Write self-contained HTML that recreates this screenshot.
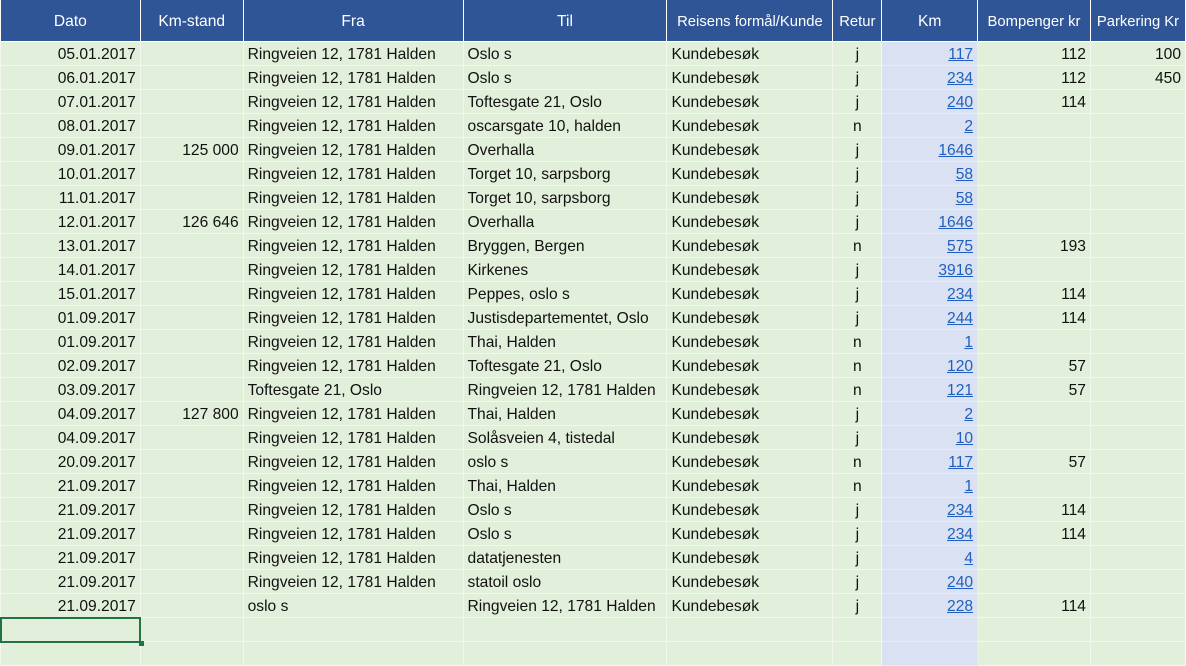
<!DOCTYPE html>
<html><head><meta charset="utf-8"><style>
body{margin:0;width:1186px;height:665px;overflow:hidden;background:#e2efda;font-family:"Liberation Sans",sans-serif;font-size:15.6px;color:#111}
table{border-collapse:collapse;table-layout:fixed;position:absolute;left:0;top:0}
td,th{padding:2px 4px 0 4px;height:21px;border:1px solid #f3f7ef;white-space:nowrap;overflow:hidden}
th{background:#2f5597;color:#fff;font-weight:normal;height:39px;border:1px solid #fff;border-top:none;text-align:center;font-size:15.6px}
td.r{text-align:right}td.c{text-align:center}
td.k{background:#d9e1f2;text-align:right;border-color:#e6ebf6}
td.k a{color:#1f5fbf;text-decoration:underline}
td.bl{border-left:1px solid #8c8c8c}
.sel{position:absolute;left:0;top:617px;width:137px;height:22px;border:2px solid #217346}
.sel:after{content:"";position:absolute;right:-5px;bottom:-5px;width:5px;height:5px;background:#217346}
</style></head><body>
<table>
<colgroup><col style="width:140px"><col style="width:103px"><col style="width:220px"><col style="width:204px"><col style="width:166px"><col style="width:49px"><col style="width:96px"><col style="width:113px"><col style="width:95px"></colgroup>
<tr><th>Dato</th><th>Km-stand</th><th>Fra</th><th>Til</th><th style="padding:2px 1px 0;font-size:14.8px">Reisens formål/Kunde</th><th style="padding:2px 0 0;font-size:14.8px">Retur</th><th>Km</th><th style="padding:2px 1px 0;font-size:14.8px">Bompenger kr</th><th style="padding:2px 1px 0;font-size:14.8px">Parkering Kr</th></tr>
<tr><td class="r">05.01.2017</td><td></td><td>Ringveien 12, 1781 Halden</td><td>Oslo s</td><td>Kundebesøk</td><td class="c">j</td><td class="k"><a>117</a></td><td class="r bl">112</td><td class="r bl">100</td></tr>
<tr><td class="r">06.01.2017</td><td></td><td>Ringveien 12, 1781 Halden</td><td>Oslo s</td><td>Kundebesøk</td><td class="c">j</td><td class="k"><a>234</a></td><td class="r bl">112</td><td class="r bl">450</td></tr>
<tr><td class="r">07.01.2017</td><td></td><td>Ringveien 12, 1781 Halden</td><td>Toftesgate 21, Oslo</td><td>Kundebesøk</td><td class="c">j</td><td class="k"><a>240</a></td><td class="r bl">114</td><td class="r bl"></td></tr>
<tr><td class="r">08.01.2017</td><td></td><td>Ringveien 12, 1781 Halden</td><td>oscarsgate 10, halden</td><td>Kundebesøk</td><td class="c">n</td><td class="k"><a>2</a></td><td class="r bl"></td><td class="r bl"></td></tr>
<tr><td class="r">09.01.2017</td><td class="r">125 000</td><td>Ringveien 12, 1781 Halden</td><td>Overhalla</td><td>Kundebesøk</td><td class="c">j</td><td class="k"><a>1646</a></td><td class="r bl"></td><td class="r bl"></td></tr>
<tr><td class="r">10.01.2017</td><td></td><td>Ringveien 12, 1781 Halden</td><td>Torget 10, sarpsborg</td><td>Kundebesøk</td><td class="c">j</td><td class="k"><a>58</a></td><td class="r bl"></td><td class="r bl"></td></tr>
<tr><td class="r">11.01.2017</td><td></td><td>Ringveien 12, 1781 Halden</td><td>Torget 10, sarpsborg</td><td>Kundebesøk</td><td class="c">j</td><td class="k"><a>58</a></td><td class="r bl"></td><td class="r bl"></td></tr>
<tr><td class="r">12.01.2017</td><td class="r">126 646</td><td>Ringveien 12, 1781 Halden</td><td>Overhalla</td><td>Kundebesøk</td><td class="c">j</td><td class="k"><a>1646</a></td><td class="r bl"></td><td class="r bl"></td></tr>
<tr><td class="r">13.01.2017</td><td></td><td>Ringveien 12, 1781 Halden</td><td>Bryggen, Bergen</td><td>Kundebesøk</td><td class="c">n</td><td class="k"><a>575</a></td><td class="r bl">193</td><td class="r bl"></td></tr>
<tr><td class="r">14.01.2017</td><td></td><td>Ringveien 12, 1781 Halden</td><td>Kirkenes</td><td>Kundebesøk</td><td class="c">j</td><td class="k"><a>3916</a></td><td class="r bl"></td><td class="r bl"></td></tr>
<tr><td class="r">15.01.2017</td><td></td><td>Ringveien 12, 1781 Halden</td><td>Peppes, oslo s</td><td>Kundebesøk</td><td class="c">j</td><td class="k"><a>234</a></td><td class="r bl">114</td><td class="r bl"></td></tr>
<tr><td class="r">01.09.2017</td><td></td><td>Ringveien 12, 1781 Halden</td><td>Justisdepartementet, Oslo</td><td>Kundebesøk</td><td class="c">j</td><td class="k"><a>244</a></td><td class="r bl">114</td><td class="r bl"></td></tr>
<tr><td class="r">01.09.2017</td><td></td><td>Ringveien 12, 1781 Halden</td><td>Thai, Halden</td><td>Kundebesøk</td><td class="c">n</td><td class="k"><a>1</a></td><td class="r bl"></td><td class="r bl"></td></tr>
<tr><td class="r">02.09.2017</td><td></td><td>Ringveien 12, 1781 Halden</td><td>Toftesgate 21, Oslo</td><td>Kundebesøk</td><td class="c">n</td><td class="k"><a>120</a></td><td class="r bl">57</td><td class="r bl"></td></tr>
<tr><td class="r">03.09.2017</td><td></td><td>Toftesgate 21, Oslo</td><td>Ringveien 12, 1781 Halden</td><td>Kundebesøk</td><td class="c">n</td><td class="k"><a>121</a></td><td class="r bl">57</td><td class="r bl"></td></tr>
<tr><td class="r">04.09.2017</td><td class="r">127 800</td><td>Ringveien 12, 1781 Halden</td><td>Thai, Halden</td><td>Kundebesøk</td><td class="c">j</td><td class="k"><a>2</a></td><td class="r bl"></td><td class="r bl"></td></tr>
<tr><td class="r">04.09.2017</td><td></td><td>Ringveien 12, 1781 Halden</td><td>Solåsveien 4, tistedal</td><td>Kundebesøk</td><td class="c">j</td><td class="k"><a>10</a></td><td class="r bl"></td><td class="r bl"></td></tr>
<tr><td class="r">20.09.2017</td><td></td><td>Ringveien 12, 1781 Halden</td><td>oslo s</td><td>Kundebesøk</td><td class="c">n</td><td class="k"><a>117</a></td><td class="r bl">57</td><td class="r bl"></td></tr>
<tr><td class="r">21.09.2017</td><td></td><td>Ringveien 12, 1781 Halden</td><td>Thai, Halden</td><td>Kundebesøk</td><td class="c">n</td><td class="k"><a>1</a></td><td class="r bl"></td><td class="r bl"></td></tr>
<tr><td class="r">21.09.2017</td><td></td><td>Ringveien 12, 1781 Halden</td><td>Oslo s</td><td>Kundebesøk</td><td class="c">j</td><td class="k"><a>234</a></td><td class="r bl">114</td><td class="r bl"></td></tr>
<tr><td class="r">21.09.2017</td><td></td><td>Ringveien 12, 1781 Halden</td><td>Oslo s</td><td>Kundebesøk</td><td class="c">j</td><td class="k"><a>234</a></td><td class="r bl">114</td><td class="r bl"></td></tr>
<tr><td class="r">21.09.2017</td><td></td><td>Ringveien 12, 1781 Halden</td><td>datatjenesten</td><td>Kundebesøk</td><td class="c">j</td><td class="k"><a>4</a></td><td class="r bl"></td><td class="r bl"></td></tr>
<tr><td class="r">21.09.2017</td><td></td><td>Ringveien 12, 1781 Halden</td><td>statoil oslo</td><td>Kundebesøk</td><td class="c">j</td><td class="k"><a>240</a></td><td class="r bl"></td><td class="r bl"></td></tr>
<tr><td class="r">21.09.2017</td><td></td><td>oslo s</td><td>Ringveien 12, 1781 Halden</td><td>Kundebesøk</td><td class="c">j</td><td class="k"><a>228</a></td><td class="r bl">114</td><td class="r bl"></td></tr>
<tr><td></td><td></td><td></td><td></td><td></td><td></td><td class="k"></td><td class="bl"></td><td class="bl"></td></tr>
<tr><td></td><td></td><td></td><td></td><td></td><td></td><td class="k"></td><td class="bl"></td><td class="bl"></td></tr>
</table>
<div class="sel"></div>
</body></html>
